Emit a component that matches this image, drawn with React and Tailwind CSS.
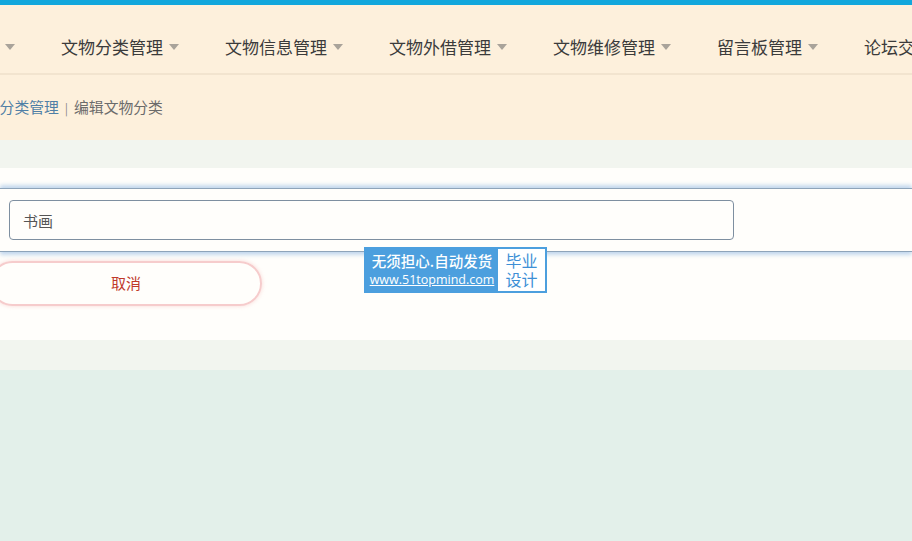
import React from "react";

const navItems = ["用户管理", "文物分类管理", "文物信息管理", "文物外借管理", "文物维修管理", "留言板管理", "论坛交流管理"];

function Caret() {
  return (
    <span className="ml-[6px] inline-block h-0 w-0 border-x-[5.5px] border-t-[6px] border-x-transparent border-t-[#a9a39a]" />
  );
}

export default function App() {
  return (
    <div
      className="relative h-[541px] w-[912px] overflow-hidden bg-[#e3f0ea]"
      style={{ fontFamily: '"Noto Sans CJK SC", "Noto Sans", sans-serif' }}
    >
      {/* top strip */}
      <div className="h-[5px] bg-[#12a7dc]" />

      {/* nav */}
      <div className="flex h-[70px] items-center whitespace-nowrap border-b-2 border-[#f2e4cf] bg-[#fdf0dc] pt-[16px]">
        <div className="-ml-[69px] flex items-center gap-[46px]">
          {navItems.map((item) => (
            <div key={item} className="flex items-center text-[17px] text-[#3b3b3b]">
              {item}
              <Caret />
            </div>
          ))}
        </div>
      </div>

      {/* breadcrumb */}
      <div className="flex h-[65px] items-center whitespace-nowrap bg-[#fdf0dc] text-[14.8px]">
        <span className="-ml-[30px] text-[#4f7fa6]">文物分类管理</span>
        <span className="mx-[6px] text-[12px] text-[#888]">|</span>
        <span className="text-[#6b6b6b]">编辑文物分类</span>
      </div>

      <div className="h-[28px] bg-[#f2f5ef]" />

      {/* form card */}
      <div className="h-[172px] bg-[#fffefb] pt-[20px]">
        <div className="border-y border-[#8ea4ba] bg-[#fffefb] px-[9px] py-[11px] shadow-[0_-3px_4px_rgba(90,150,215,0.35),0_3px_4px_rgba(90,150,215,0.35)]">
          <input
            defaultValue="书画"
            className="h-[40px] w-[725px] rounded-[4px] border border-[#7e8fa0] bg-transparent px-[13px] text-[15px] text-[#555] outline-none"
          />
        </div>
        <div className="mt-[9px] flex">
          <button className="-ml-[10px] h-[45px] w-[272px] rounded-full border-2 border-[#f6cccc] text-[15px] text-[#c0392b] shadow-[0_0_4px_rgba(240,160,160,0.4)]">
            取消
          </button>
        </div>
      </div>

      <div className="h-[30px] bg-[#f2f5ef]" />

      {/* watermark */}
      <div className="absolute left-[364px] top-[247px] flex h-[46px] border-2 border-[#4c9fde] bg-[#4c9fde]">
        <div className="flex w-[132px] flex-col items-center justify-center leading-none text-white">
          <span className="text-[14.5px] font-medium">无须担心.自动发货</span>
          <span className="mt-[5px] text-[12.5px] underline" style={{ fontFamily: '"Open Sans", "Noto Sans", sans-serif' }}>
            www.51topmind.com
          </span>
        </div>
        <div className="flex w-[47px] flex-col items-center justify-center bg-white text-[16px] leading-[19px] text-[#3d8fd6]">
          <span>毕业</span>
          <span>设计</span>
        </div>
      </div>
    </div>
  );
}
